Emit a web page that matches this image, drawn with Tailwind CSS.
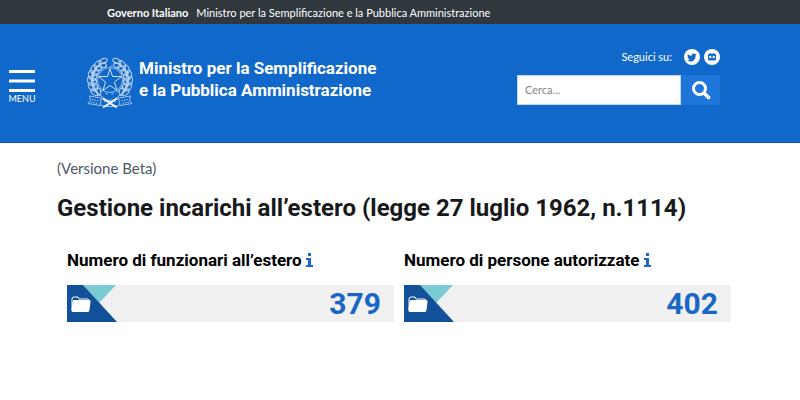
<!DOCTYPE html>
<html lang="it">
<head>
    <meta charset="UTF-8">
    <meta name="viewport" content="width=device-width, initial-scale=1.0">
    <title>Gestione incarichi all’estero</title>
    <script src="https://cdn.jsdelivr.net/npm/@tailwindcss/browser@4"></script>
</head>
<body class="bg-white font-['Roboto',sans-serif] text-[#17191a]">
    <!-- Top bar -->
    <div class="bg-[#30373d] h-6 pt-0.5 pl-[107px] flex items-center gap-2 font-['Lato',sans-serif] text-[11px] text-white whitespace-nowrap">
        <a href="#" class="font-bold">Governo Italiano</a>
        <a href="#">Ministro per la Semplificazione e la Pubblica Amministrazione</a>
    </div>

    <!-- Header -->
    <header class="bg-[#1168cb] border-b border-[#0d57ae] h-[119px] pl-[9px] pr-20 flex items-center">
        <button type="button" class="mt-2 w-[26px] flex flex-col items-center text-white">
            <svg class="w-[26px] h-[23px]" viewBox="0 0 26 23" fill="currentColor" aria-hidden="true">
                <path d="M0 0h26v3H0zM0 9.500h26v3H0zM0 19h26v3H0z"/>
            </svg>
            <span class="font-['Lato',sans-serif] text-[9px] leading-3">MENU</span>
        </button>

        <a href="#" class="ml-[52px] flex items-start gap-[6px] text-white">
            <svg class="w-[46px] h-[52px] shrink-0" viewBox="0 0 92 104" fill="none" stroke="currentColor" aria-hidden="true">
                <defs>
                    <g id="leaf">
                        <path d="M46 9C38 9 38 1 47 1c6 0 9 3 11 7-4 3-9 3-12 1z"/>
                        <path d="M46 11c-4 6 2 10 9 7 4-2 5-4 5-7-5-2-10-3-14 0zM43 10h13"/>
                    </g>
                    <g id="branch" stroke-width="2">
                        <use href="#leaf" transform="rotate(16 46 46)"/>
                        <use href="#leaf" transform="rotate(34 46 46)"/>
                        <use href="#leaf" transform="rotate(52 46 46)"/>
                        <use href="#leaf" transform="rotate(70 46 46)"/>
                        <use href="#leaf" transform="rotate(88 46 46)"/>
                        <use href="#leaf" transform="rotate(106 46 46)"/>
                        <use href="#leaf" transform="rotate(124 46 46)"/>
                        <path d="M72 22c12 18 10 40-6 54-6 6-16 12-28 24"/>
                    </g>
                </defs>
                <g opacity=".7">
                    <use href="#branch"/>
                    <use href="#branch" transform="matrix(-1 0 0 1 92 0)"/>
                </g>
                <circle cx="46" cy="46" r="25" stroke-width="2" opacity=".55"/>
                <circle cx="46" cy="46" r="28" stroke-width="3" stroke-dasharray="5 7" opacity=".35"/>
                <path d="M46 23l5 16h18L55 50l5 17-14-10-14 10 5-17-14-11h18z" fill="#1168cb" stroke-width="2" opacity=".8"/>
                <g stroke-width="2" opacity=".6">
                    <path d="M5 78l24 4-3 15-24-4 5-6zM87 78l-24 4 3 15 24-4-5-6z"/>
                    <path d="M29 83c11 5 23 5 34 0M26 96c13 4 27 4 40 0"/>
                    <path d="M10 85l15 3M8 90l14 3M82 85l-15 3M84 90l-14 3M34 89h24" stroke-dasharray="3 2"/>
                </g>
                <path d="M32 101l28-18M60 101L32 83" stroke-width="4" opacity=".9"/>
            </svg>
            <span class="text-[17px] leading-[22px] font-bold whitespace-nowrap">Ministro per la Semplificazione<br>e la Pubblica Amministrazione</span>
        </a>

        <div class="ml-auto mb-3 w-[203px] flex flex-col gap-[10px]">
            <div class="h-4 flex items-center justify-end gap-1 font-['Lato',sans-serif] text-[11px] text-white">
                <span class="mr-2">Seguici su:</span>
                <a href="#" aria-label="Twitter">
                    <svg class="size-4" viewBox="0 0 16 16" aria-hidden="true">
                        <circle cx="8" cy="8" r="8" fill="#fff"/>
                        <path fill="#1168cb" d="M12.500 5.300l-1 .3.700-1-1.200.5a2 2 0 0 0-3.300 1.700C6 6.700 4.700 6 3.800 4.900c-.5 1-.3 2 .6 2.700l-.9-.2c0 1 .6 1.700 1.600 2h-.9c.3.800 1 1.300 1.900 1.400-.8.600-1.800.9-2.900.8 4 2.300 8.500 0 8.400-5.200z"/>
                    </svg>
                </a>
                <a href="#" aria-label="Flickr">
                    <svg class="size-4" viewBox="0 0 16 16" aria-hidden="true">
                        <circle cx="8" cy="8" r="8" fill="#fff"/>
                        <rect x="4" y="4.500" width="8" height="7" rx="1.500" fill="#1168cb"/>
                        <circle cx="6.300" cy="8" r="1.200" fill="#fff"/>
                        <circle cx="9.700" cy="8" r="1.200" fill="#fff"/>
                    </svg>
                </a>
            </div>
            <form class="flex h-[30px]">
                <label for="cerca" class="sr-only">Cerca</label>
                <input id="cerca" type="text" placeholder="Cerca..." class="flex-1 min-w-0 bg-white border border-[#c5d5e8] px-[7px] font-['Lato',sans-serif] text-[11px] leading-4 text-gray-700 placeholder:text-[#85858a]">
                <button type="submit" aria-label="Cerca" class="w-[39px] bg-[#1f76da] flex items-center justify-center">
                    <svg class="size-5" viewBox="0 0 20 20" fill="none" stroke="#fff" aria-hidden="true">
                        <circle cx="8.500" cy="8.500" r="6" stroke-width="3"/>
                        <path d="M13 13l4.500 4.500" stroke-width="3.500" stroke-linecap="round"/>
                    </svg>
                </button>
            </form>
        </div>
    </header>

    <!-- Content -->
    <main class="pl-[57px] pr-[69px] pt-4">
        <p class="font-['Lato',sans-serif] text-[15px] leading-[18px] text-[#4d5966]">(Versione Beta)</p>
        <h1 class="mt-[15px] text-[24px] leading-8 font-bold whitespace-nowrap">Gestione incarichi all’estero (legge 27 luglio 1962, n.1114)</h1>

        <div class="mt-6 pl-[10px] grid grid-cols-2 gap-[10px]">
            <section>
                <h2 class="text-[17px] leading-6 font-bold text-black whitespace-nowrap flex items-center gap-1">
                    Numero di funzionari all’estero
                    <a href="#" aria-label="Informazioni">
                        <svg class="w-[7px] h-[14px]" viewBox="0 0 7 14" fill="#1a66ce" aria-hidden="true"><path d="M2 0h3v3H2zM0 5h5v7h2v2H0v-2h2V7H0z"/></svg>
                    </a>
                </h2>
                <div class="mt-[13px] h-[37px] bg-[#f0f0f0] pr-[13px] flex items-center justify-between">
                    <svg class="w-[50px] h-[37px]" viewBox="0 0 50 37" aria-hidden="true">
                        <path d="M16 0h33L32 18z" fill="#7bcbd2"/>
                        <path d="M0 0h16l34 37H0z" fill="#12509a"/>
                        <path d="M5 25V14q0-2 2-2h4l1 2h8q2 0 2 2" fill="none" stroke="#fff"/>
                        <path d="M7 15h15q2 0 1.500 2l-1 8q-.2 2-2 2H6q-2 0-1.500-2l1-8q.2-2 1.500-2z" fill="#fff"/>
                    </svg>
                    <span class="text-[30px] leading-9 font-bold text-[#1a66c8]">379</span>
                </div>
            </section>
            <section>
                <h2 class="text-[17px] leading-6 font-bold text-black whitespace-nowrap flex items-center gap-1">
                    Numero di persone autorizzate
                    <a href="#" aria-label="Informazioni">
                        <svg class="w-[7px] h-[14px]" viewBox="0 0 7 14" fill="#1a66ce" aria-hidden="true"><path d="M2 0h3v3H2zM0 5h5v7h2v2H0v-2h2V7H0z"/></svg>
                    </a>
                </h2>
                <div class="mt-[13px] h-[37px] bg-[#f0f0f0] pr-[13px] flex items-center justify-between">
                    <svg class="w-[50px] h-[37px]" viewBox="0 0 50 37" aria-hidden="true">
                        <path d="M16 0h33L32 18z" fill="#7bcbd2"/>
                        <path d="M0 0h16l34 37H0z" fill="#12509a"/>
                        <path d="M5 25V14q0-2 2-2h4l1 2h8q2 0 2 2" fill="none" stroke="#fff"/>
                        <path d="M7 15h15q2 0 1.500 2l-1 8q-.2 2-2 2H6q-2 0-1.500-2l1-8q.2-2 1.500-2z" fill="#fff"/>
                    </svg>
                    <span class="text-[30px] leading-9 font-bold text-[#1a66c8]">402</span>
                </div>
            </section>
        </div>
    </main>
</body>
</html>
